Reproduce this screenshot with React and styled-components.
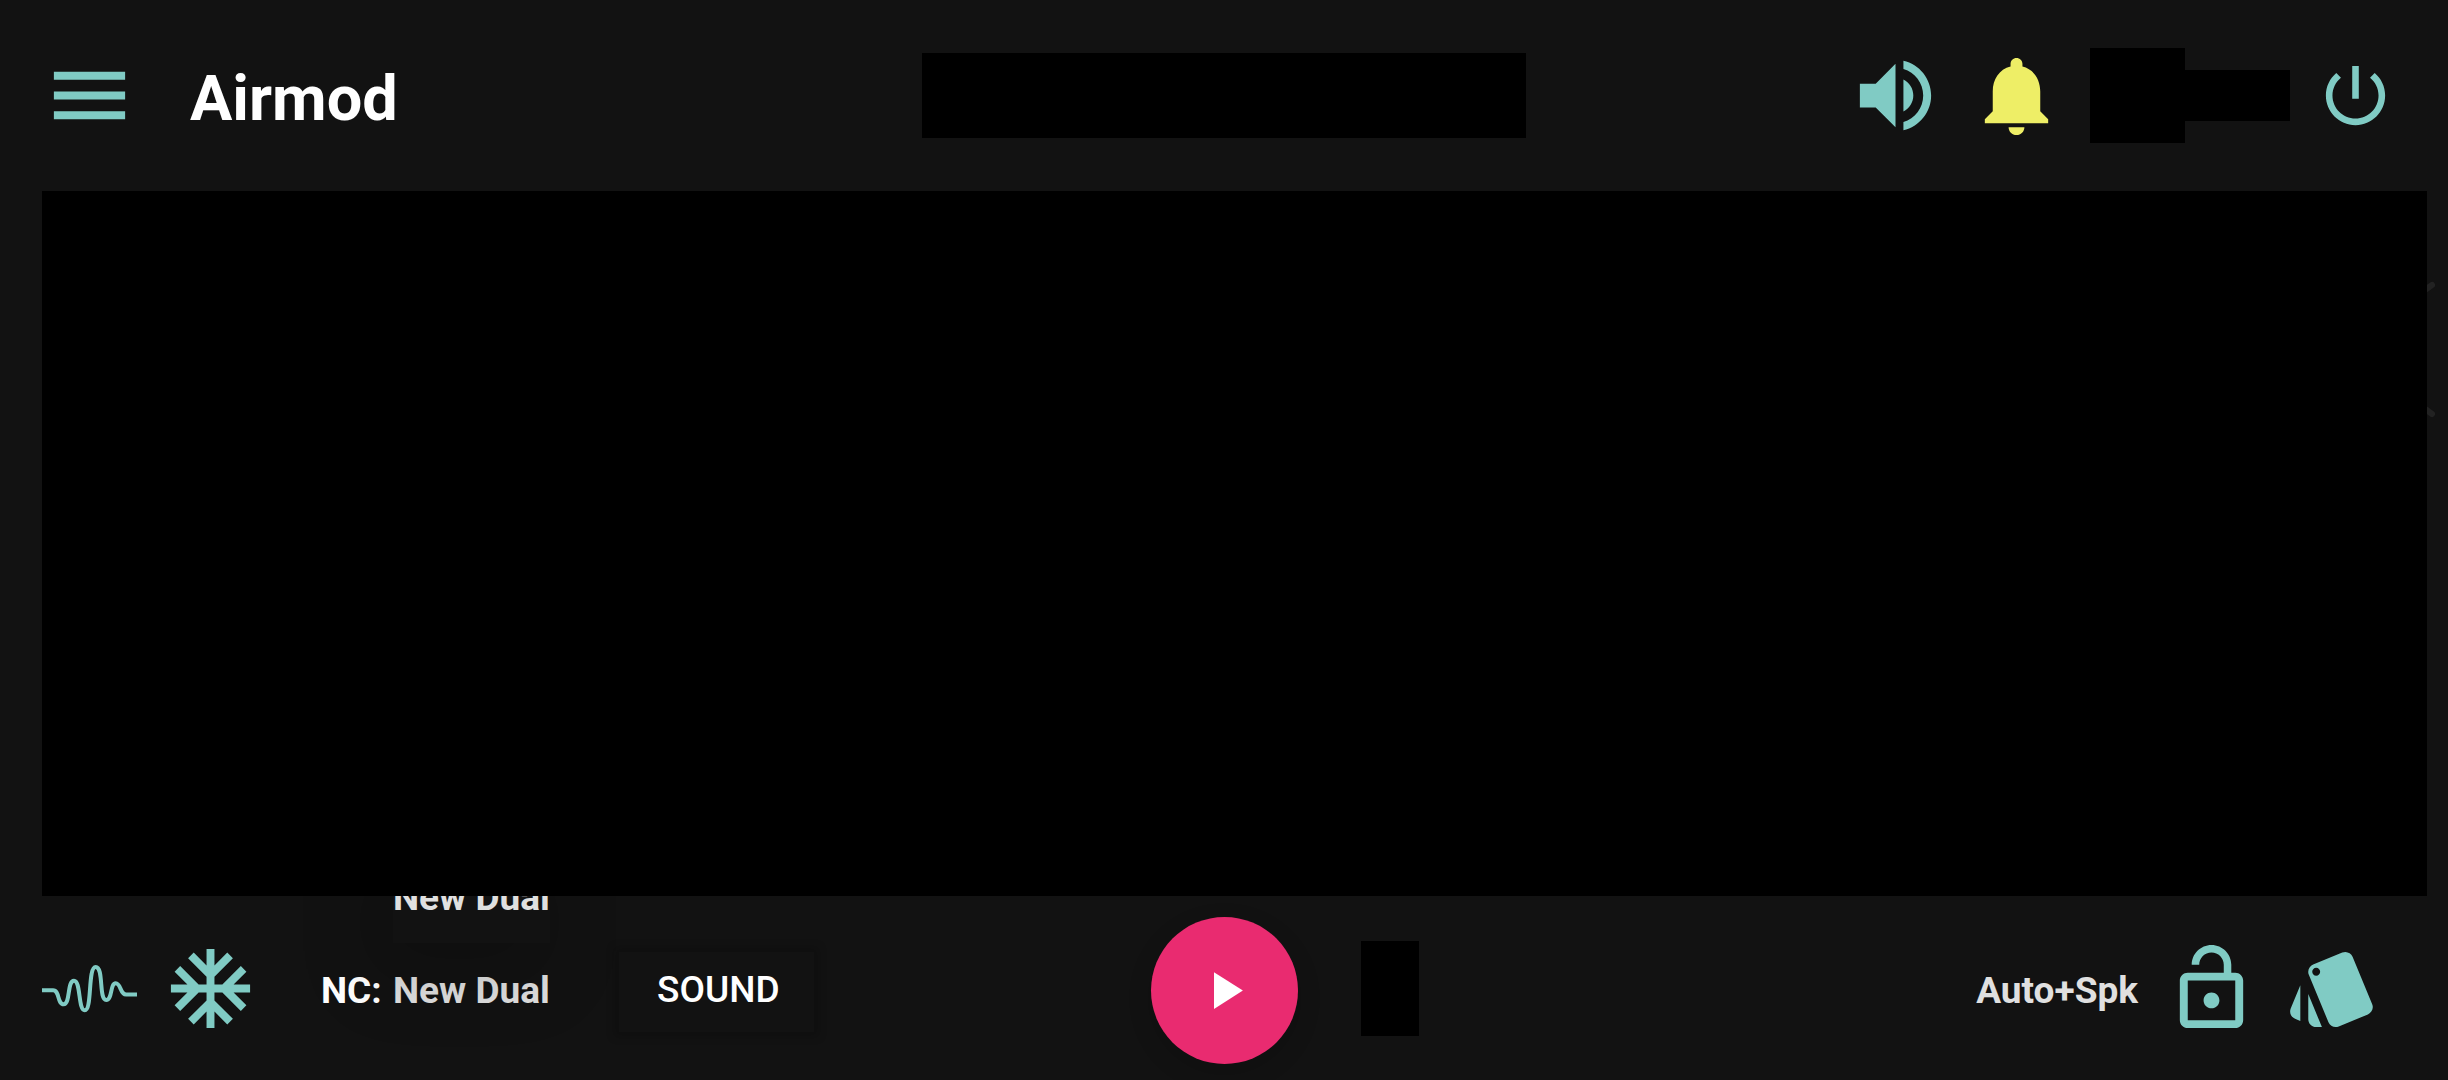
import React from "react";
import styled, { createGlobalStyle } from "styled-components";

const GlobalStyle = createGlobalStyle`
  * { box-sizing: border-box; }
  body {
    margin: 0;
    background: #121212;
    color: #fff;
    font-family: Roboto, "Liberation Sans", sans-serif;
    overflow-x: hidden;
  }
`;

const Page = styled.div`
  display: flex;
  flex-direction: column;
  min-height: 100vh;
`;

const Bar = styled.header`
  display: grid;
  grid-template-columns: minmax(0, 1fr) auto minmax(0, 1fr);
  align-items: center;
  height: ${(p) => p.$height}px;
  padding-top: ${(p) => p.$top || 0}px;
  padding-bottom: ${(p) => p.$bottom || 0}px;
  flex: none;
`;

const Side = styled.div`
  display: flex;
  align-items: center;
  justify-content: ${(p) => p.$justify || "flex-start"};
  padding-left: ${(p) => p.$left || 0}px;
  padding-right: ${(p) => p.$right || 0}px;
`;

const Tools = styled.div`
  display: flex;
  align-items: center;
  gap: 26px;
  padding-bottom: ${(p) => p.$lift || 0}px;
`;

const IconButton = styled.button`
  display: block;
  flex: none;
  width: ${(p) => p.$size || 95}px;
  height: ${(p) => p.$size || 95}px;
  padding: 0;
  border: 0;
  background: none;
  color: ${(p) => p.$color || "#80cbc4"};
  cursor: pointer;

  svg {
    display: block;
    width: 100%;
    height: 100%;
    fill: currentColor;
  }
`;

const Title = styled.h1`
  margin: 0 0 0 53px;
  padding-top: 6px;
  font-size: 63px;
  line-height: 76px;
  font-weight: 700;
`;

const Block = styled.div`
  flex: none;
  width: ${(p) => p.$width}px;
  height: ${(p) => p.$height}px;
  background: #000;
`;

const Account = styled.div`
  display: flex;
  align-items: center;
`;

const Middle = styled.div`
  position: relative;
  display: flex;
  flex: 1;
  padding: 0 21px 0 42px;
`;

const Panel = styled.main`
  position: relative;
  z-index: 2;
  flex: 1;
  background: #000;
`;

const PagerArrow = styled.button`
  position: absolute;
  top: 86px;
  right: 12px;
  width: 96px;
  height: 144px;
  padding: 0;
  border: 0;
  background: none;
  color: #222;

  svg { display: block; }
`;

const Field = styled.div`
  display: flex;
  align-items: center;
  margin-left: 63px;
  font-size: 37px;
  line-height: 44px;
  font-weight: 700;
`;

const FieldLabel = styled.span`
  width: 72px;
`;

const Picker = styled.div`
  position: relative;
`;

const Value = styled.button`
  height: 96px;
  padding: 0;
  border: 0;
  background: none;
  color: #e0e0e0;
  font: inherit;
  white-space: nowrap;
`;

const Popup = styled.div`
  position: absolute;
  bottom: 100%;
  left: 0;
  right: 0;
  height: 90px;
  display: flex;
  align-items: center;
  background: #121212;
  color: #e0e0e0;
  white-space: nowrap;
  box-shadow: -12px 24px 72px 12px rgba(0, 0, 0, 0.16);
`;

const SoundButton = styled.button`
  width: 195px;
  height: 80px;
  margin: 3px 0 0 69px;
  padding: 0 0 4px 4px;
  border: 0;
  background: #121212;
  color: #fff;
  font: 500 37px/44px Roboto, "Liberation Sans", sans-serif;
  box-shadow: 0 0 8px 5px rgba(0, 0, 0, 0.18);
`;

const PlayButton = styled(IconButton)`
  display: grid;
  place-items: center;
  border-radius: 50%;
  background: #e92b70;
  box-shadow: 0 8px 24px rgba(0, 0, 0, 0.16);

  svg {
    width: 63px;
    height: 63px;
  }
`;

const Mode = styled.span`
  margin-right: 26px;
  color: #e0e0e0;
  font-size: 37px;
  line-height: 44px;
  font-weight: 700;
`;

const RightGroup = styled.div`
  display: flex;
  align-items: center;
`;

const Lifted = styled.div`
  padding-bottom: 4px;
`;

const paths = {
  menu: "M3 18h18v-2H3v2zm0-5h18v-2H3v2zm0-7v2h18V6H3z",
  volume:
    "M3 9v6h4l5 5V4L7 9H3zm13.5 3c0-1.77-1.02-3.29-2.5-4.03v8.05c1.48-.73 2.5-2.25 2.5-4.02zM14 3.23v2.06c2.89.86 5 3.54 5 6.71s-2.11 5.85-5 6.71v2.06c4.01-.91 7-4.49 7-8.77s-2.99-7.86-7-8.77z",
  bell: "M12 22c1.1 0 2-.9 2-2h-4c0 1.1.89 2 2 2zm6-6v-5c0-3.07-1.64-5.64-4.5-6.32V4c0-.83-.67-1.5-1.5-1.5s-1.5.67-1.5 1.5v.68C7.63 5.36 6 7.92 6 11v5l-2 2v1h16v-1l-2-2z",
  power:
    "M13 3h-2v10h2V3zm4.83 2.17l-1.42 1.42C17.99 7.86 19 9.81 19 12c0 3.87-3.13 7-7 7s-7-3.13-7-7c0-2.19 1.01-4.14 2.58-5.42L6.17 5.17C4.23 6.82 3 9.26 3 12c0 4.97 4.03 9 9 9s9-4.03 9-9c0-2.74-1.23-5.18-3.17-6.83z",
  snow: "M22 11h-4.17l3.24-3.24-1.41-1.42L15 11h-2V9l4.66-4.66-1.42-1.41L13 6.17V2h-2v4.17L7.76 2.93 6.34 4.34 11 9v2H9L4.34 6.34 2.93 7.76 6.17 11H2v2h4.17l-3.24 3.24 1.41 1.42L9 13h2v2l-4.66 4.66 1.42 1.41L11 17.83V22h2v-4.17l3.24 3.24 1.42-1.41L13 15v-2h2l4.66 4.66 1.41-1.42L17.83 13H22z",
  play: "M8 5v14l11-7z",
  lock: "M12 17c1.1 0 2-.9 2-2s-.9-2-2-2-2 .9-2 2 .9 2 2 2zm6-9h-1V6c0-2.76-2.24-5-5-5S7 3.24 7 6h1.9c0-1.71 1.39-3.1 3.1-3.1 1.71 0 3.1 1.39 3.1 3.1v2H6c-1.1 0-2 .9-2 2v10c0 1.1.9 2 2 2h12c1.1 0 2-.9 2-2V10c0-1.1-.9-2-2-2zm0 12H6V10h12v10z",
  cards:
    "M2.53 19.65l1.34.56v-9.03l-2.43 5.86c-.41 1.02.08 2.19 1.09 2.61zm19.5-3.7L17.07 3.98c-.31-.75-1.04-1.21-1.81-1.23-.26 0-.53.04-.79.15L7.1 5.95c-.75.31-1.21 1.03-1.23 1.8-.01.27.04.54.15.8l4.96 11.97c.31.76 1.05 1.22 1.83 1.23.26 0 .52-.05.77-.15l7.36-3.05c1.02-.42 1.51-1.59 1.09-2.6zM7.88 8.75c-.55 0-1-.45-1-1s.45-1 1-1 1 .45 1 1-.45 1-1 1zm-2 11c0 1.1.9 2 2 2h1.45l-3.45-8.34v6.34z",
};

function Icon({ name }) {
  return (
    <svg viewBox="0 0 24 24" aria-hidden="true">
      <path d={paths[name]} />
    </svg>
  );
}

function WaveIcon() {
  return (
    <svg viewBox="0 0 95 95" aria-hidden="true">
      <path
        d="M0 49.3H11C18 49.3 15 63.3 21.7 63.3C28.5 63.3 25 39.7 32 39.7C39 39.7 36 69.3 42.7 69.3C50.5 69.3 45.5 26 53.7 26C62 26 56.5 59 64.2 59C70.5 59 68 42.3 73.7 42.3C79 42.3 78 53.5 84 53.5H95"
        fill="none"
        stroke="currentColor"
        strokeWidth="4"
      />
    </svg>
  );
}

export default function App() {
  return (
    <Page>
      <GlobalStyle />
      <Bar $height={191}>
        <Side $left={42}>
          <IconButton aria-label="Menu"><Icon name="menu" /></IconButton>
          <Title>Airmod</Title>
        </Side>
        <Block $width={604} $height={85} />
        <Side $justify="flex-end" $right={53}>
          <Tools>
            <IconButton aria-label="Volume"><Icon name="volume" /></IconButton>
            <IconButton aria-label="Notifications" $color="#eeee66"><Icon name="bell" /></IconButton>
            <Account>
              <Block $width={95} $height={95} />
              <Block $width={105} $height={51} />
            </Account>
            <IconButton aria-label="Power" $size={79}><Icon name="power" /></IconButton>
          </Tools>
        </Side>
      </Bar>

      <Middle>
        <Panel />
        <PagerArrow aria-label="Previous">
          <svg width="96" height="144" aria-hidden="true">
            <path d="M92 8L4 71L92 137" fill="none" stroke="currentColor" strokeWidth="6" strokeLinecap="round" />
          </svg>
        </PagerArrow>
      </Middle>

      <Bar as="footer" $height={184} $top={21} $bottom={16}>
        <Side $left={42}>
          <Tools $lift={4}>
            <IconButton aria-label="Waveform"><WaveIcon /></IconButton>
            <IconButton aria-label="Freeze"><Icon name="snow" /></IconButton>
          </Tools>
          <Field>
            <FieldLabel id="nc">NC:</FieldLabel>
            <Picker>
              <Value aria-labelledby="nc nc-value"><span id="nc-value">New Dual</span></Value>
              <Popup>New Dual</Popup>
            </Picker>
          </Field>
          <SoundButton>SOUND</SoundButton>
        </Side>
        <PlayButton aria-label="Play" $size={147} $color="#fff"><Icon name="play" /></PlayButton>
        <Side $justify="space-between" $left={63} $right={68}>
          <Lifted><Block $width={58} $height={95} /></Lifted>
          <RightGroup>
            <Mode>Auto+Spk</Mode>
            <Tools $lift={4}>
              <IconButton aria-label="Unlock"><Icon name="lock" /></IconButton>
              <IconButton aria-label="Styles"><Icon name="cards" /></IconButton>
            </Tools>
          </RightGroup>
        </Side>
      </Bar>
    </Page>
  );
}
